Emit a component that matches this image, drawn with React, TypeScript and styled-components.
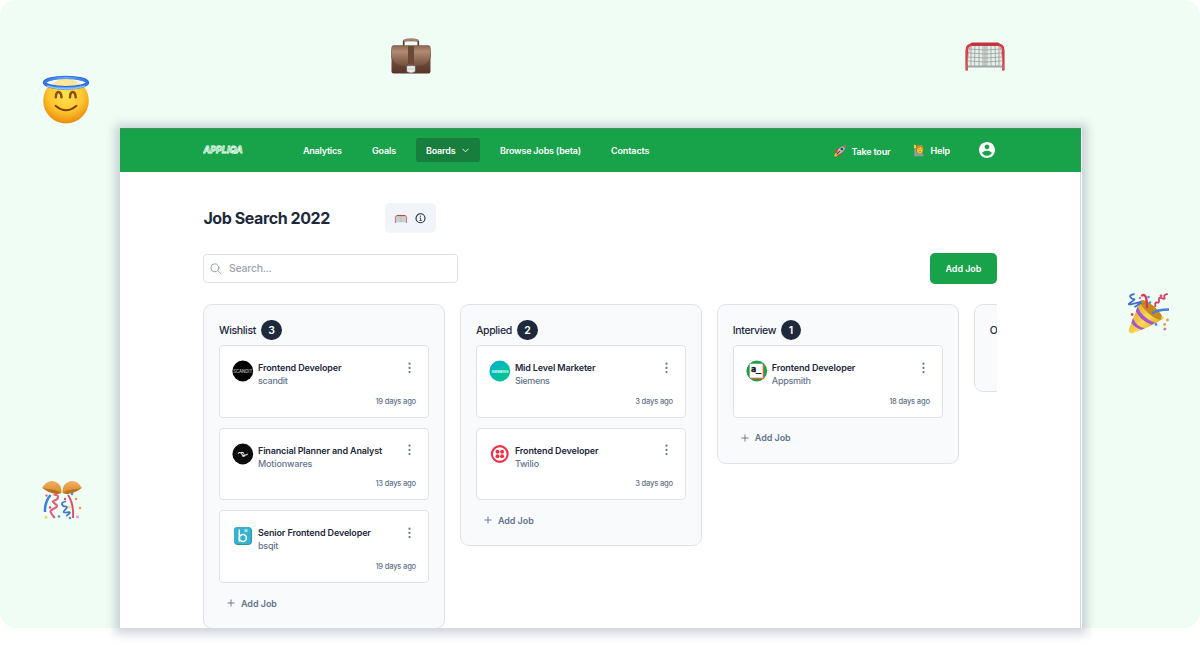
import React from "react";
import styled, { createGlobalStyle, css } from "styled-components";

const GlobalStyle = createGlobalStyle`
  * { box-sizing: border-box; }
  body {
    margin: 0;
    min-height: 645px;
    background: #fff;
    color: #1e293b;
    font-family: "Inter", "Liberation Sans", sans-serif;
  }
  svg { display: block; flex: none; }
`;

const Stage = styled.main`
  position: relative;
  width: 1200px;
  height: 628px;
  padding: 128px 0 0 120px;
  background: #f0fdf4;
  border-radius: 16px;
`;

const Sticker = styled.div<{ $x: number; $y: number }>`
  position: absolute;
  left: ${(p) => p.$x}px;
  top: ${(p) => p.$y}px;
`;

const Window = styled.div`
  width: 962px;
  height: 500px;
  display: flex;
  flex-direction: column;
  background: #fff;
  box-shadow: 0 1px 9px 5px rgba(100, 110, 140, 0.29);
`;

const Clip = styled.div`
  width: 961px;
  height: 500px;
  display: flex;
  flex-direction: column;
  overflow: hidden;
`;

const Label = styled.span<{ $ls?: number }>`
  letter-spacing: ${(p) => p.$ls ?? 0}px;
  white-space: nowrap;
`;

const NavBar = styled.header`
  flex: none;
  width: 961px;
  height: 44px;
  display: flex;
  align-items: center;
  padding: 0 86px 1px 83px;
  background: #18a34a;
  border-top: 1px solid #3f9560;
  color: #fff;
  font-size: 9px;
  font-weight: 600;
`;

const Brand = styled.div`
  width: 90px;
`;

const NavItem = styled.a<{ $active?: boolean; $w: number }>`
  width: ${(p) => p.$w}px;
  height: 24px;
  display: flex;
  align-items: center;
  justify-content: space-between;
  padding: 0 11px 0 10px;
  border-radius: 3px;
  ${(p) =>
    p.$active &&
    css`
      background: #177e3d;
    `}
`;

const NavGap = styled.div<{ $w?: number }>`
  width: ${(p) => p.$w ?? 0}px;
  ${(p) => !p.$w && "flex: 1;"}
`;

const NavAction = styled.a<{ $shift?: number; $gap: number }>`
  display: flex;
  align-items: center;
  gap: ${(p) => p.$gap}px;
  padding-top: ${(p) => p.$shift ?? 0}px;
`;

const Content = styled.section`
  width: 961px;
  padding: 31px 0 0 83px;
  display: flex;
  flex-direction: column;
  flex: 1;
  min-height: 0;
  border-right: 1px solid #d3d8dd;
`;

const TitleRow = styled.div`
  display: flex;
  align-items: center;
  height: 30px;
`;

const Title = styled.h1`
  margin: 0;
  width: 182.4px;
  padding-left: 0.4px;
  font-size: 16px;
  line-height: 20px;
  font-weight: 700;
  color: #1e293b;
`;

const BoardInfo = styled.div`
  width: 51px;
  height: 30px;
  padding: 1px 10px 0;
  border-radius: 5px;
  background: #f1f5f9;
  display: flex;
  align-items: center;
  gap: 7.5px;
`;

const Toolbar = styled.div`
  margin-top: 20px;
  width: 793.6px;
  height: 31px;
  display: flex;
  align-items: center;
  justify-content: space-between;
`;

const Search = styled.div`
  width: 255px;
  height: 29px;
  display: flex;
  align-items: center;
  gap: 7px;
  padding-left: 6px;
  border: 1px solid #dfe2e7;
  border-radius: 4px;
  color: #9ca3af;
  font-size: 10.5px;
  font-weight: 500;
`;

const PrimaryButton = styled.button`
  width: 66.4px;
  height: 31px;
  padding: 0;
  border: 0;
  border-radius: 5px;
  background: #18a34a;
  color: #fff;
  font: 600 9px "Inter", sans-serif;
`;

const Board = styled.div`
  margin-top: 20px;
  width: 794px;
  height: 340px;
  flex: none;
  display: flex;
  align-items: flex-start;
  gap: 14.9px;
  overflow: hidden;
`;

const Column = styled.section<{ $min?: number }>`
  flex: none;
  width: 242px;
  min-height: ${(p) => p.$min ?? 0}px;
  padding: 15px 15px 10px;
  background: #f8fafc;
  border: 1px solid #dfe3e9;
  border-radius: 9px;
`;

const ColumnHead = styled.div`
  height: 20px;
  display: flex;
  align-items: center;
  gap: 5px;
  font-size: 10.5px;
  font-weight: 500;
`;

const Count = styled.span<{ $w: number }>`
  width: ${(p) => p.$w}px;
  height: 20.5px;
  border-radius: 11px;
  display: flex;
  align-items: center;
  justify-content: center;
  background: #1e293b;
  color: #fff;
  font-size: 10.5px;
  font-weight: 600;
`;

const Cards = styled.div`
  margin-top: 5px;
  display: flex;
  flex-direction: column;
  gap: 10.1px;
`;

const Card = styled.article`
  height: 72.5px;
  padding: 13px 12px 0;
  background: #fff;
  border: 1px solid #dfe3e9;
  border-radius: 4px;
`;

const CardTop = styled.div`
  display: flex;
  height: 36.5px;
`;

const Avatar = styled.div`
  width: 22px;
  margin: 1px 4px 0 0;
`;

const CardText = styled.div`
  flex: 1;
  display: flex;
  flex-direction: column;
  padding-top: 2px;
`;

const Role = styled.div`
  font-size: 9px;
  line-height: 13px;
  font-weight: 600;
  color: #1e293b;
`;

const Company = styled.div`
  font-size: 9px;
  line-height: 13px;
  font-weight: 500;
  color: #64748b;
`;

const Age = styled.div`
  height: 12px;
  text-align: right;
  font-size: 7.6px;
  line-height: 12px;
  font-weight: 500;
  letter-spacing: -0.21px;
  color: #64748b;
`;

const AddRow = styled.div`
  height: 30px;
  margin-top: 5.4px;
  padding-left: 8px;
  display: flex;
  align-items: center;
  gap: 6px;
  color: #64748b;
  font-size: 9px;
  font-weight: 600;
`;

const BrandText = styled.text`
  font: italic 700 9.5px "Inter", sans-serif;
`;

const Logo = () => (
  <svg width="42" height="12" viewBox="0 0 42 12">
    <BrandText x="0.6" y="9.4" textLength="39" lengthAdjust="spacingAndGlyphs" fill="#18a34a" stroke="#effff4" strokeWidth="0.85">
      APPLIQA
    </BrandText>
  </svg>
);

const Chevron = () => (
  <svg width="7" height="5" viewBox="0 0 7 5" fill="none" stroke="#fff" strokeWidth="0.9" strokeLinecap="round" strokeLinejoin="round">
    <path d="M.7 1 3.5 3.8 6.3 1" />
  </svg>
);

const Rocket = () => (
  <svg width="12" height="12" viewBox="0 0 12 12">
    <path d="M.8 6.6 3.4 3.6 6.2 3.8 4 7.6Z" fill="#f0392b" />
    <path d="M4.8 8.2 8.4 5.8 8.2 8.4 5.2 11.2Z" fill="#f0392b" />
    <path d="M.2 11.6 1 8.6 3 7.8 4.4 9.3 2.7 11.2Z" fill="#ffc02e" />
    <path d="M1.6 10.2 2.4 8.8l1 .8Z" fill="#ff7d1e" />
    <path d="M3 8C4 4 7 1 11.6.4 11.2 4.8 8 8 4.2 9.2Z" fill="#b9cdda" />
    <path d="M8.4 1.3 11.7.3 10.8 3.6Z" fill="#f04a38" />
    <circle cx="7.9" cy="4.1" r="1.5" fill="#2b4f7a" />
    <path d="m2.8 9.2 3.4-3.4" stroke="#a3202f" strokeWidth="1.2" />
  </svg>
);

const HelpPerson = () => (
  <svg width="12" height="13" viewBox="0 0 12 13">
    <path d="M1 12.3C1 8.6 3 8 6 8c3.3 0 4.6 1.6 4.6 4.3Z" fill="#8b9d9c" />
    <path d="M1.5 3.5 3 3.2 3.4 9 1.4 10.8Z" fill="#9ba6a4" />
    <rect x="3.2" y="1.1" width="7" height="8.6" rx="3.2" fill="#b87a1c" />
    <ellipse cx="6.8" cy="5.8" rx="2.8" ry="3.7" fill="#ffcc3b" />
    <path d="M3.8 5C5.5 4.8 6.7 4 7.3 2.8c.5 1.2 1.2 1.8 2.5 2.2V2L7 .8 4 2Z" fill="#c98a2a" />
    <path d="M.8 4 1 .6l1.9.3.5 3.1Z" fill="#ffc736" />
    <circle cx="5.8" cy="5.5" r=".4" fill="#64420f" />
    <circle cx="8" cy="5.5" r=".4" fill="#64420f" />
    <path d="M5.7 7.3q1.2 1.1 2.4 0" stroke="#955a13" strokeWidth=".6" fill="none" />
  </svg>
);

const UserIcon = () => (
  <svg width="16" height="16" viewBox="2 2 20 20" fill="#fff">
    <path d="M12 2C6.48 2 2 6.48 2 12s4.48 10 10 10 10-4.48 10-10S17.52 2 12 2zm0 3c1.66 0 3 1.34 3 3s-1.34 3-3 3-3-1.34-3-3 1.34-3 3-3zm0 14.2c-2.5 0-4.71-1.28-6-3.22.03-1.99 4-3.08 6-3.08 1.99 0 5.97 1.09 6 3.08-1.29 1.94-3.5 3.22-6 3.22z" />
  </svg>
);

const InfoIcon = () => (
  <svg width="11" height="11" viewBox="0 0 11 11" fill="none" stroke="#1e293b">
    <circle cx="5.5" cy="5.3" r="4.5" strokeWidth="1.1" />
    <path d="M4.6 4.9h1v2.6M4.5 7.5h2.2" strokeWidth=".75" />
    <circle cx="5.4" cy="3.2" r=".6" fill="#1e293b" stroke="none" />
  </svg>
);

const SearchIcon = () => (
  <svg width="12" height="12" viewBox="0 0 12 12" fill="none" stroke="#9ca3af" strokeWidth="1" strokeLinecap="round">
    <circle cx="4.9" cy="4.8" r="4" />
    <path d="m7.9 7.7 3.2 3.2" />
  </svg>
);

const Dots = () => (
  <svg width="3" height="12" viewBox="0 0 3 12" fill="#64748b">
    <circle cx="1.5" cy="1.7" r="1.1" />
    <circle cx="1.5" cy="5.9" r="1.1" />
    <circle cx="1.5" cy="10.1" r="1.1" />
  </svg>
);

const MenuButton = styled.div`
  padding: 2.6px 5px 0 0;
`;

const Plus = () => (
  <svg width="8" height="8" viewBox="0 0 8 8" stroke="#64748b" strokeWidth=".9">
    <path d="M.5 4h7M4 .5v7" />
  </svg>
);

const Net = ({ w, h }: { w: number; h: number }) => (
  <svg width={w} height={h} viewBox="0 0 40 29" preserveAspectRatio="none">
    <path d="M5 3h30l2 21H3Z" fill="#e6eeea" />
    <path
      d="M6 3v21M10 3 9.5 24M14 3v21M18 3v21M22 3v21M26 3v21M30 3l.5 21M34 3v21M3 7q17 2 34 0M3 11q17 2 34 0M3 15q17 2 34 0M3 19q17 2 34 0"
      stroke="#929c98"
      strokeWidth=".75"
      fill="none"
    />
    <path d="M20 3v22" stroke="#ab9797" strokeWidth="1" />
    <path d="M3 24.5h34" stroke="#9ea7a9" strokeWidth="1.8" />
    <path d="M1.7 27.5V8.5Q1.7 3 7 2.6h26q5.3.4 5.3 5.9v19" stroke="#cf4248" strokeWidth="2.6" fill="none" strokeLinecap="round" />
    <path d="M7 1.9h26" stroke="#c2333a" strokeWidth="3" strokeLinecap="round" />
    <path d="M2 27q1-18 3-22M38 27q-1-18-3-22" stroke="#e57c7f" strokeWidth=".8" fill="none" />
  </svg>
);

const Halo = () => (
  <svg width="50" height="50" viewBox="0 0 50 50">
    <defs>
      <radialGradient id="face" cx=".5" cy=".36" r=".64">
        <stop offset="0" stopColor="#ffe550" />
        <stop offset=".6" stopColor="#fdc52e" />
        <stop offset="1" stopColor="#ec8a0c" />
      </radialGradient>
      <linearGradient id="ring" x1="0" x2="1">
        <stop offset="0" stopColor="#3373e6" />
        <stop offset=".5" stopColor="#5fa9f8" />
        <stop offset="1" stopColor="#3373e6" />
      </linearGradient>
    </defs>
    <circle cx="25" cy="25.7" r="22.8" fill="url(#face)" />
    <ellipse cx="25" cy="7.4" rx="21" ry="4.8" fill="#f3faf1" />
    <path d="M10.5 9.6Q25-2.5 39.5 9.6Q25 13 10.5 9.6Z" fill="#fde79a" />
    <ellipse cx="25" cy="7.6" rx="21.5" ry="5.2" fill="none" stroke="#2b62d9" strokeWidth="3.4" />
    <ellipse cx="25" cy="8" rx="21.3" ry="5.2" fill="none" stroke="url(#ring)" strokeWidth="2.5" />
    <path d="M6 11.2Q25 16.4 44 11.2" fill="none" stroke="#86c5fb" strokeWidth="1.5" />
    <path d="M14.8 22.3c.4-7 5-7 5.7 0M29 22.3c.4-7 5-7 5.7 0" fill="none" stroke="#8a4d07" strokeWidth="2.5" strokeLinecap="round" />
    <path d="M14.5 30.8q10.5 9 21 0" fill="none" stroke="#7d4304" strokeWidth="2" strokeLinecap="round" />
  </svg>
);

const Briefcase = () => (
  <svg width="42" height="38" viewBox="0 0 42 38">
    <defs>
      <linearGradient id="flap" x2="0" y2="1">
        <stop offset="0" stopColor="#8c6653" />
        <stop offset=".3" stopColor="#b18a72" />
        <stop offset="1" stopColor="#75503f" />
      </linearGradient>
      <linearGradient id="body" x2="0" y2="1">
        <stop offset="0" stopColor="#8d6856" />
        <stop offset="1" stopColor="#573527" />
      </linearGradient>
    </defs>
    <path d="M13.7 8V4q0-1.7 2-1.7h10.6q2 0 2 1.7v4" fill="none" stroke="#5a4034" strokeWidth="1.7" />
    <path d="M14 2.8Q21 .2 28 2.8" fill="none" stroke="#a78270" strokeWidth="2.6" />
    <path d="M3 8h36l1.5 5v20.5q0 2-2 2h-35q-2 0-2-2V13Z" fill="url(#body)" />
    <path d="M3.5 7.5h35q2 0 2 4v8q-3 8-11 8h-17q-8 0-11-8v-8q0-4 2-4Z" fill="url(#flap)" stroke="#704d3e" strokeWidth=".5" />
    <path d="M18 8h6v18h-6Z" fill="#6b4838" />
    <path d="M17 28h8v5.6q-4 2.2-8 0Z" fill="#eceef0" stroke="#aeb0b1" strokeWidth=".6" />
    <path d="M18 31h6" stroke="#bfc3c4" />
  </svg>
);

const Popper = () => (
  <svg width="43" height="42" viewBox="0 0 43 42">
    <defs>
      <linearGradient id="cone" x1="0" x2="1" y1=".2" y2="1">
        <stop offset="0" stopColor="#d8a11d" />
        <stop offset=".5" stopColor="#ffd851" />
        <stop offset="1" stopColor="#c98e16" />
      </linearGradient>
    </defs>
    <path d="M12.5 7.5 34 26Q25 33 5 40q-5 1-4-4Z" fill="url(#cone)" />
    <ellipse cx="23.3" cy="16.9" rx="4.4" ry="14" transform="rotate(-49 23.3 16.9)" fill="#c48a1c" />
    <path d="M9.5 13.5Q14 25 27 29.8L23.5 31.8Q12 27.5 7.8 18ZM5 25Q8 33.5 16.8 35.3L13.5 36.8Q6 34.5 3.4 29.5Z" fill="#a158d0" />
    <path d="M14 2.5q5-3 5 12" fill="none" stroke="#db3659" strokeWidth="2.3" strokeLinecap="round" />
    <path d="M24 20.5q5-4 17-4" fill="none" stroke="#477ed7" strokeWidth="2.4" />
    <path d="M6.5 1Q1 2 2.5 4.2T6 6.2 2.6 9.5t5.4.6T6.4 14" fill="none" stroke="#416fd1" strokeWidth="1.8" />
    <path d="M27.5 14q-1-5 1.5-4.4t2-2.8 3-1.6 2.4-.8T39.8.8" fill="none" stroke="#da3e63" strokeWidth="1.8" />
    <circle cx="20.5" cy="4" r="1.3" fill="#4b90e2" /><circle cx="33" cy="2.8" r="1.4" fill="#de4870" />
    <circle cx="22" cy="9.5" r="1.3" fill="#4b90e2" /><circle cx="28" cy="31.5" r="1.4" fill="#4b90e2" />
    <circle cx="34.5" cy="25" r="1.4" fill="#ead952" /><circle cx="39.5" cy="27" r="1.4" fill="#e79b4d" />
    <circle cx="36.5" cy="31.5" r="1.4" fill="#e79b4d" /><circle cx="36.8" cy="36" r="1.5" fill="#e475a2" />
    <circle cx="4.2" cy="21.5" r="1.4" fill="#de4870" /><circle cx="12" cy="5" r="1.2" fill="#9a79ce" />
  </svg>
);

const ConfettiBall = () => (
  <svg width="42" height="40" viewBox="0 0 42 40">
    <defs>
      <linearGradient id="shell" x2="0" y2="1">
        <stop offset="0" stopColor="#f0b063" />
        <stop offset="1" stopColor="#d78a2c" />
      </linearGradient>
    </defs>
    <path d="M1 8Q6-.5 13 1.2q8.5 2.5 7.3 11.8Q14 14.5 1 8Z" fill="url(#shell)" />
    <path d="M41 8Q36-.5 29 1.2q-8.5 2.5-7.3 11.8Q28 14.5 41 8Z" fill="url(#shell)" />
    <path d="M1.5 8q5 1.2 9.5 1.6 5 .8 9.3 3.2-2 1.6-6.3.9Q7 12.6 1.5 8Zm39 0q-5 1.2-9.5 1.6-5 .8-9.3 3.2 2 1.6 6.3.9Q35 12.6 40.5 8Z" fill="#b8701c" />
    <path d="M9.5 15Q3.6 22 4 32" fill="none" stroke="#3e80df" strokeWidth="2.5" />
    <path d="M27 15q6 9 5 23" fill="none" stroke="#df4d70" strokeWidth="2" />
    <path d="M12.5 14.5q4.5 0 4.5 2.6t-3.4 3.4.4 3.2.4 4-4.6 3 4 7.3" fill="none" stroke="#e0607c" strokeWidth="2.2" />
    <path d="M25 21.5q-4.5.6-4 2.8t3.6 2.2-.6 3.4 2.2 2.4-1 3.7" fill="none" stroke="#4572c6" strokeWidth="1.7" />
    <circle cx="5.5" cy="15.5" r="1.2" fill="#e66d92" /><circle cx="31" cy="14" r="1.3" fill="#4f90dc" />
    <circle cx="35" cy="19" r="1.3" fill="#eb9c4a" /><circle cx="39" cy="28" r="1.3" fill="#eb9c4a" />
    <circle cx="36.5" cy="37" r="1.4" fill="#ee91b8" /><circle cx="29" cy="38" r="1.3" fill="#4f90dc" />
    <circle cx="18" cy="36.5" r="1.3" fill="#4f90dc" /><circle cx="5" cy="37.5" r="1.4" fill="#eddc4b" />
    <circle cx="9" cy="27.5" r="1.2" fill="#d94968" /><circle cx="28.5" cy="27" r="1.3" fill="#eddc4b" />
    <circle cx="24" cy="19" r="1.2" fill="#d94968" />
  </svg>
);

const LogoText = styled.text<{ $size: number; $mono?: boolean }>`
  font: 600 ${(p) => p.$size}px ${(p) => (p.$mono ? '"DejaVu Sans Mono", monospace' : '"Inter", sans-serif')};
`;

type BrandName = "scandit" | "motion" | "bsqit" | "siemens" | "twilio" | "appsmith";

const CompanyLogo = ({ brand }: { brand: BrandName }) => (
  <svg width="22" height="22" viewBox="0 0 22 22">
    {brand === "scandit" && (
      <>
        <circle cx="10.8" cy="11" r="10.4" fill="#020202" />
        <LogoText $size={4.3} x="1.3" y="12.5" textLength="19" fill="#a8a8a8">SCANDIT</LogoText>
      </>
    )}
    {brand === "motion" && (
      <>
        <circle cx="10.8" cy="11" r="10.4" fill="#0c0c0c" />
        <path d="M6 10.5q2-2 3.4.2t3.2 1.2q2 .5 3-1M8.8 9.7q2-1 3.2 1M10 12.5q1.8 1.5 3.2.2" stroke="#e8e8e8" strokeWidth="1.1" fill="none" />
      </>
    )}
    {brand === "bsqit" && (
      <>
        <rect x="2" y="2" width="18" height="18" rx="4" fill="#2596b6" />
        <rect x="2" y="2" width="17" height="17" rx="3.5" fill="#34b2cf" />
        <path d="M7.3 4.5v12.2" stroke="#fff" strokeWidth="1.5" />
        <circle cx="10.9" cy="13.1" r="3.5" fill="none" stroke="#fff" strokeWidth="1.5" />
        <path d="M12.4 4.2h3.2v2.9h-3.2z" fill="#a5e1ed" />
      </>
    )}
    {brand === "siemens" && (
      <>
        <defs>
          <linearGradient id="teal" x1="0" x2="1" y1="0" y2="1">
            <stop offset="0" stopColor="#00afcf" />
            <stop offset="1" stopColor="#00ca86" />
          </linearGradient>
        </defs>
        <circle cx="10.8" cy="11" r="10.4" fill="url(#teal)" />
        <LogoText $size={3.9} x="2.5" y="12.5" textLength="17" fill="#e6fffb">SIEMENS</LogoText>
      </>
    )}
    {brand === "twilio" && (
      <>
        <circle cx="10.8" cy="11" r="7.9" fill="#fff" stroke="#f22f46" strokeWidth="2.1" />
        <g fill="#f22f46">
          <circle cx="8.5" cy="8.7" r="1.95" />
          <circle cx="13.1" cy="8.7" r="1.95" />
          <circle cx="8.5" cy="13.3" r="1.95" />
          <circle cx="13.1" cy="13.3" r="1.95" />
        </g>
      </>
    )}
    {brand === "appsmith" && (
      <>
        <defs>
          <clipPath id="disc"><circle cx="10.8" cy="11" r="10.4" /></clipPath>
        </defs>
        <circle cx="10.8" cy="11" r="10.4" fill="#20a04c" />
        <g clipPath="url(#disc)">
          <path d="M5 5h13v14H5Z" fill="#e5672e" />
          <path d="M3.7 3.7h13v13.5h-13Z" fill="#fff" />
          <path d="M4 17.5h13" stroke="#e9d3c6" />
        </g>
        <LogoText $size={8.5} $mono x="5" y="12.2" fill="#111" stroke="#111" strokeWidth=".4">a_</LogoText>
      </>
    )}
  </svg>
);

interface Job { role: string; rs: number; company: string; cs: number; age: string; brand: BrandName; }
interface ColumnData { name: string; ls: number; count: number; pill: number; jobs: Job[]; }

const columns: ColumnData[] = [
  {
    name: "Wishlist", ls: -0.34, count: 3, pill: 21.5,
    jobs: [
      { role: "Frontend Developer", rs: -0.12, company: "scandit", cs: -0.28, age: "19 days ago", brand: "scandit" },
      { role: "Financial Planner and Analyst", rs: -0.15, company: "Motionwares", cs: -0.14, age: "13 days ago", brand: "motion" },
      { role: "Senior Frontend Developer", rs: -0.13, company: "bsqit", cs: -0.25, age: "19 days ago", brand: "bsqit" },
    ],
  },
  {
    name: "Applied", ls: -0.34, count: 2, pill: 21.5,
    jobs: [
      { role: "Mid Level Marketer", rs: -0.15, company: "Siemens", cs: -0.32, age: "3 days ago", brand: "siemens" },
      { role: "Frontend Developer", rs: -0.12, company: "Twilio", cs: -0.15, age: "3 days ago", brand: "twilio" },
    ],
  },
  {
    name: "Interview", ls: -0.34, count: 1, pill: 19.5,
    jobs: [{ role: "Frontend Developer", rs: -0.12, company: "Appsmith", cs: -0.28, age: "18 days ago", brand: "appsmith" }],
  },
];

const BoardColumn = ({ data }: { data: ColumnData }) => (
  <Column>
    <ColumnHead>
      <Label $ls={data.ls}>{data.name}</Label>
      <Count $w={data.pill}>{data.count}</Count>
    </ColumnHead>
    <Cards>
      {data.jobs.map((job) => (
        <Card key={job.brand}>
          <CardTop>
            <Avatar><CompanyLogo brand={job.brand} /></Avatar>
            <CardText>
              <Role><Label $ls={job.rs}>{job.role}</Label></Role>
              <Company><Label $ls={job.cs}>{job.company}</Label></Company>
            </CardText>
            <MenuButton><Dots /></MenuButton>
          </CardTop>
          <Age>{job.age}</Age>
        </Card>
      ))}
    </Cards>
    <AddRow><Plus /><Label $ls={-0.05}>Add Job</Label></AddRow>
  </Column>
);

export default function App() {
  return (
    <>
      <GlobalStyle />
      <Stage>
        <Sticker $x={41} $y={75}><Halo /></Sticker>
        <Sticker $x={390} $y={38}><Briefcase /></Sticker>
        <Sticker $x={965} $y={42}><Net w={40} h={29} /></Sticker>
        <Sticker $x={1128} $y={293}><Popper /></Sticker>
        <Sticker $x={41} $y={480}><ConfettiBall /></Sticker>
        <Window>
          <Clip>
            <NavBar>
              <Brand><Logo /></Brand>
              <NavItem $w={69}><Label $ls={-0.24}>Analytics</Label></NavItem>
              <NavItem $w={54}><Label $ls={-0.12}>Goals</Label></NavItem>
              <NavItem $w={64} $active><Label $ls={-0.2}>Boards</Label><Chevron /></NavItem>
              <NavGap $w={10} />
              <NavItem $w={111}><Label $ls={-0.2}>Browse Jobs (beta)</Label></NavItem>
              <NavItem $w={60}><Label $ls={-0.12}>Contacts</Label></NavItem>
              <NavGap />
              <NavAction $gap={5} $shift={2}><Rocket /><Label $ls={-0.18}>Take tour</Label></NavAction>
              <NavGap $w={23} />
              <NavAction $gap={5}><HelpPerson /><Label $ls={-0.1}>Help</Label></NavAction>
              <NavGap $w={29} />
              <UserIcon />
            </NavBar>
            <Content>
              <TitleRow>
                <Title><Label $ls={-0.42}>Job Search 2022</Label></Title>
                <BoardInfo><Net w={12} h={8} /><InfoIcon /></BoardInfo>
              </TitleRow>
              <Toolbar>
                <Search><SearchIcon /><Label $ls={-0.25}>Search...</Label></Search>
                <PrimaryButton><Label $ls={-0.05}>Add Job</Label></PrimaryButton>
              </Toolbar>
              <Board>
                {columns.map((c) => <BoardColumn key={c.name} data={c} />)}
                <Column $min={88}><ColumnHead><Label $ls={-0.9}>O</Label></ColumnHead></Column>
              </Board>
            </Content>
          </Clip>
        </Window>
      </Stage>
    </>
  );
}
